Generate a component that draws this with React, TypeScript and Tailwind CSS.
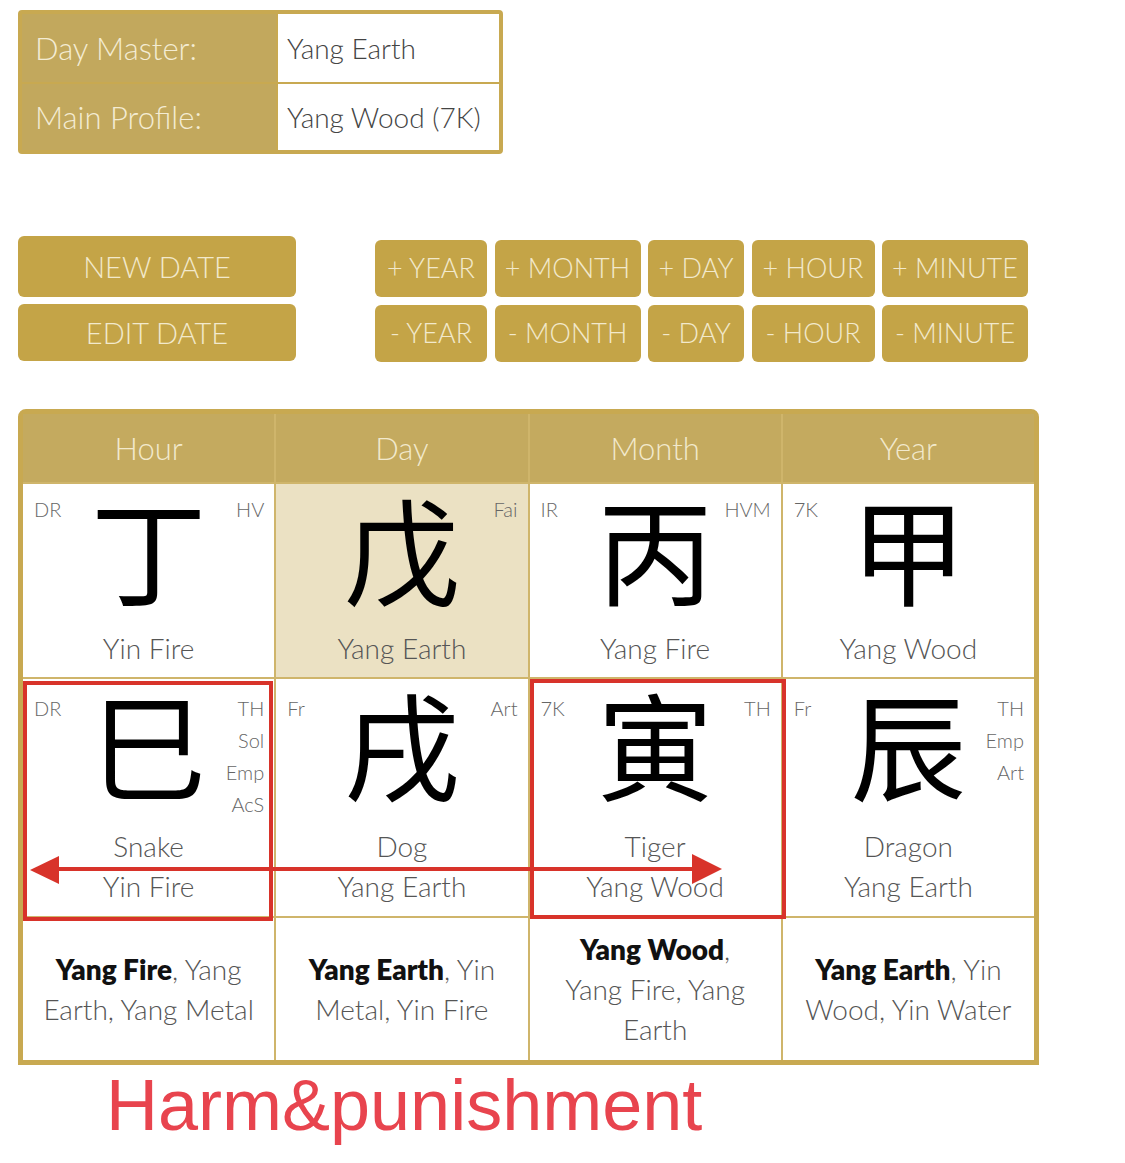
import React from "react";

type Cell = { l: string; r: string[]; ch: string; el: string[]; bg: string };

const stems: Cell[] = [
  { l: "DR", r: ["HV"], ch: "丁", el: ["Yin Fire"], bg: "bg-white" },
  { l: "", r: ["Fai"], ch: "戊", el: ["Yang Earth"], bg: "bg-[#ebe1c3]" },
  { l: "IR", r: ["HVM"], ch: "丙", el: ["Yang Fire"], bg: "bg-white" },
  { l: "7K", r: [""], ch: "甲", el: ["Yang Wood"], bg: "bg-white" },
];

const branches: Cell[] = [
  { l: "DR", r: ["TH", "Sol", "Emp", "AcS"], ch: "巳", el: ["Snake", "Yin Fire"], bg: "bg-white" },
  { l: "Fr", r: ["Art"], ch: "戌", el: ["Dog", "Yang Earth"], bg: "bg-white" },
  { l: "7K", r: ["TH"], ch: "寅", el: ["Tiger", "Yang Wood"], bg: "bg-white" },
  { l: "Fr", r: ["TH", "Emp", "Art"], ch: "辰", el: ["Dragon", "Yang Earth"], bg: "bg-white" },
];

function PillarCell({ c, gapTop, labelPt }: { c: Cell; gapTop: string; labelPt: string }) {
  return (
    <div className={`${c.bg} pt-[5px] grid grid-cols-[1fr_auto_1fr] grid-rows-[124px_auto]`}>
      <div className={`pl-[11px] ${labelPt} text-[20px] leading-[32px] text-[#666] font-light`}>{c.l}</div>
      <div className="-mt-[5px] text-[116px] leading-[124px] h-[124px] text-black font-['Noto_Sans_CJK_TC','Noto_Sans_CJK_SC',sans-serif]">
        {c.ch}
      </div>
      <div className={`pr-[10px] ${labelPt} text-right text-[20px] leading-[32px] text-[#666] font-light`}>
        {c.r.map((x, i) => (
          <div key={i}>{x}</div>
        ))}
      </div>
      <div className={`col-span-3 text-center ${gapTop} leading-[40px] text-[28px] text-[#555] font-light`}>
        {c.el.map((x, i) => (
          <div key={i}>{x}</div>
        ))}
      </div>
    </div>
  );
}

function Hidden({ children }: { children: React.ReactNode }) {
  return (
    <div className="bg-white flex items-center justify-center text-center text-[28px] leading-[40px] text-[#555] font-light">
      <div>{children}</div>
    </div>
  );
}

const B = ({ children }: { children: React.ReactNode }) => (
  <span className="font-extrabold text-[#111]">{children}</span>
);

export default function App() {
  const plus = [
    { t: "+ YEAR", w: "w-[112px]" },
    { t: "+ MONTH", w: "w-[146px]" },
    { t: "+ DAY", w: "w-[96px]" },
    { t: "+ HOUR", w: "w-[123px]" },
    { t: "+ MINUTE", w: "w-[146px]" },
  ];
  const minus = [
    { t: "- YEAR", w: "w-[112px]" },
    { t: "- MONTH", w: "w-[146px]" },
    { t: "- DAY", w: "w-[96px]" },
    { t: "- HOUR", w: "w-[123px]" },
    { t: "- MINUTE", w: "w-[146px]" },
  ];
  return (
    <div className="relative w-[1125px] h-[1163px] bg-white font-['Lato','Open_Sans',sans-serif] overflow-hidden">
      {/* Info box */}
      <div className="ml-[18px] pt-[10px]">
        <div className="w-[485px] border-4 border-[#c8a951] rounded-[4px] bg-[#c8a951] grid grid-cols-[254px_1fr] grid-rows-[68px_66px] gap-[2px]">
          <div className="bg-[#c2a85d] flex items-center pl-[13px] text-[31px] text-[#f4ecd3] font-light">Day Master:</div>
          <div className="bg-white flex items-center pl-[9px] text-[28px] text-[#444] font-light">Yang Earth</div>
          <div className="bg-[#c2a85d] flex items-center pl-[13px] text-[31px] text-[#f4ecd3] font-light">Main Profile:</div>
          <div className="bg-white flex items-center pl-[9px] text-[28px] text-[#444] font-light">Yang Wood (7K)</div>
        </div>
      </div>

      {/* Buttons */}
      <div className="flex ml-[18px] mt-[82px] items-start">
        <div className="flex flex-col gap-[7px] w-[278px]">
          <div className="h-[61px] rounded-[6px] bg-[#c4a447] flex items-center justify-center text-[29px] text-[#f2e9cc] font-light">NEW DATE</div>
          <div className="h-[57px] rounded-[6px] bg-[#c4a447] flex items-center justify-center text-[29px] text-[#f2e9cc] font-light">EDIT DATE</div>
        </div>
        <div className="ml-[79px] mt-[4px] flex flex-col gap-[8px]">
          <div className="flex gap-[7.5px]">
            {plus.map((b) => (
              <div key={b.t} className={`${b.w} h-[57px] rounded-[6px] bg-[#c4a447] flex items-center justify-center text-[27px] text-[#f2e9cc] font-light whitespace-nowrap`}>
                {b.t}
              </div>
            ))}
          </div>
          <div className="flex gap-[7.5px]">
            {minus.map((b) => (
              <div key={b.t} className={`${b.w} h-[57px] rounded-[6px] bg-[#c4a447] flex items-center justify-center text-[27px] text-[#f2e9cc] font-light whitespace-nowrap`}>
                {b.t}
              </div>
            ))}
          </div>
        </div>
      </div>

      {/* Table */}
      <div className="ml-[18px] mt-[47px] w-[1021px] border-[5px] border-[#c8a951] rounded-t-[8px] bg-[#cfb56b] grid grid-cols-4 grid-rows-[68px_193px_237px_142px] gap-[2px]">
        {["Hour", "Day", "Month", "Year"].map((h) => (
          <div key={h} className="bg-[#c4aa5f] flex items-center justify-center text-[31px] text-[#f2e9cc] font-light">
            {h}
          </div>
        ))}
        {stems.map((c, i) => (
          <PillarCell key={"s" + i} c={c} gapTop="mt-[15px]" labelPt="pt-[4px]" />
        ))}
        {branches.map((c, i) => (
          <PillarCell key={"b" + i} c={c} gapTop="mt-[18px]" labelPt="pt-[8px]" />
        ))}
        <Hidden>
          <B>Yang Fire</B>, Yang
          <br />
          Earth, Yang Metal
        </Hidden>
        <Hidden>
          <B>Yang Earth</B>, Yin
          <br />
          Metal, Yin Fire
        </Hidden>
        <Hidden>
          <B>Yang Wood</B>,
          <br />
          Yang Fire, Yang
          <br />
          Earth
        </Hidden>
        <Hidden>
          <B>Yang Earth</B>, Yin
          <br />
          Wood, Yin Water
        </Hidden>
      </div>

      {/* Caption */}
      <div className="ml-[106px] mt-[4px] text-[72px] leading-none text-[#e8444e] font-['Liberation_Sans',Arial,sans-serif]">
        Harm&amp;punishment
      </div>

      {/* Red annotation boxes */}
      <div className="absolute left-[23px] top-[681px] w-[250px] h-[240px] border-4 border-[#d8332a]" />
      <div className="absolute left-[530px] top-[679px] w-[256px] h-[240px] border-4 border-[#d8332a]" />

      {/* Arrow */}
      <svg className="absolute left-0 top-0" width="1125" height="1163" viewBox="0 0 1125 1163" fill="none">
        <line x1="56" y1="869" x2="694" y2="869" stroke="#d8332a" strokeWidth="4" />
        <polygon points="30,870 59,856 59,884" fill="#d8332a" />
        <polygon points="722,869 692,854 692,884" fill="#d8332a" />
      </svg>
    </div>
  );
}
